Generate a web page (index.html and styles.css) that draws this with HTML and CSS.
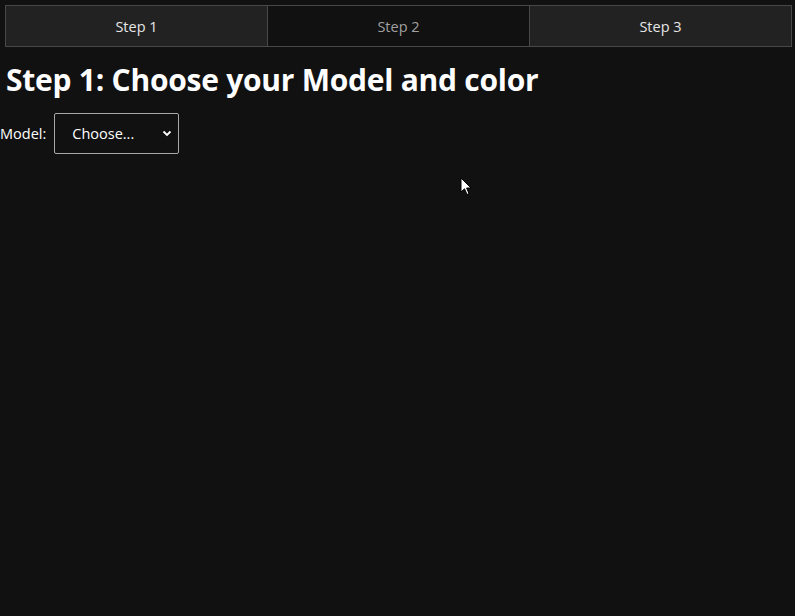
FILE: index.html
```html
<!DOCTYPE html>
<html>
<head>
<meta charset="utf-8">
<link rel="stylesheet" href="styles.css">
</head>
<body>
<nav class="tabs">
  <div class="tab">Step 1</div>
  <div class="tab tab-active">Step 2</div>
  <div class="tab">Step 3</div>
</nav>
<h1 class="title">Step 1: Choose your Model and color</h1>
<div class="row">
  <label class="label">Model:</label>
  <div class="select">
    <span class="select-text">Choose...</span>
    <svg class="chev" width="10" height="7" viewBox="0 0 10 7"><path d="M1.5 1.5 L5 5 L8.5 1.5" fill="none" stroke="#fff" stroke-width="1.8"/></svg>
  </div>
</div>
<svg class="cursor" width="14" height="20" viewBox="0 0 14 20"><path d="M1 1 L1 15 L4.5 11.8 L7 17.5 L9 16.6 L6.6 11 L11 11 Z" fill="#fff" stroke="#000" stroke-width="1"/></svg>
</body>
</html>
```
FILE: styles.css
```css
html, body {
  margin: 0;
  padding: 0;
  background: #111111;
  height: 100%;
}
body {
  font-family: "Open Sans", "Noto Sans", sans-serif;
  color: #ffffff;
  position: relative;
  overflow: hidden;
}
.tabs {
  display: flex;
  margin: 5px 3px 0 5px;
  border: 1px solid #484848;
  height: 40px;
}
.tab {
  flex: 1;
  display: flex;
  align-items: center;
  justify-content: center;
  background: #222222;
  color: #e6e6e6;
  font-size: 14.5px;
}
.tab + .tab {
  border-left: 1px solid #484848;
}
.tab-active {
  background: #111111;
  color: #a0a0a0;
}
.title {
  margin: 13px 0 0 6px;
  font-size: 30px;
  font-weight: 700;
  line-height: 40px;
  letter-spacing: -0.25px;
}
.row {
  display: flex;
  align-items: center;
  margin-top: 13px;
  gap: 8px;
  margin-left: 0;
}
.label {
  font-size: 14.5px;
}
.select {
  width: 123px;
  height: 39px;
  border: 1px solid #a8a8a8;
  border-radius: 2px;
  display: flex;
  align-items: center;
  box-sizing: content-box;
}
.select-text {
  flex: 1;
  padding-left: 17px;
  font-size: 14.5px;
}
.chev {
  margin-right: 6px;
}
.cursor {
  position: absolute;
  left: 460px;
  top: 177px;
}
```
